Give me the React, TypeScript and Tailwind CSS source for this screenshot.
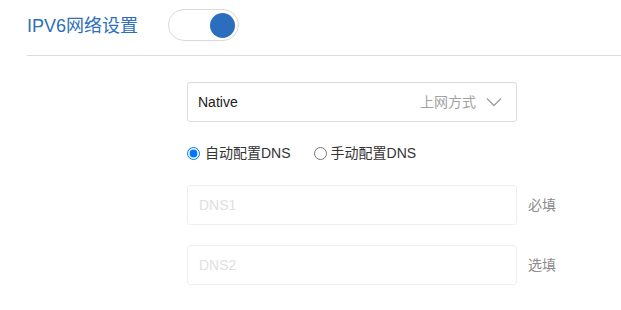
import React from 'react';

const font = { fontFamily: '"Liberation Sans", "Noto Sans CJK SC", sans-serif' };

const Toggle: React.FC<{ on: boolean }> = ({ on }) => (
  <div
    className={`w-[71px] h-[32px] rounded-full border border-[#dadada] bg-white flex items-center px-[3px] ${
      on ? 'justify-end' : 'justify-start'
    }`}
  >
    <div className="w-[25px] h-[25px] rounded-full bg-[#2a6ebd]" />
  </div>
);

const ChevronDown = () => (
  <svg width="16" height="10" viewBox="0 0 16 10" fill="none">
    <path d="M1 1.5 L8 8.5 L15 1.5" stroke="#a0a0a0" strokeWidth="1.4" />
  </svg>
);

const DnsField: React.FC<{ placeholder: string; hint: string }> = ({ placeholder, hint }) => (
  <div className="flex items-center">
    <input
      disabled
      placeholder={placeholder}
      className="w-[330px] h-[40px] border border-[#efefef] rounded-[3px] bg-white pl-[11px] text-[14px] outline-none placeholder:text-[#e0e0e0]"
      style={font}
    />
    <span className="ml-[11px] text-[14px] leading-[20px] text-[#8c8c8c]">{hint}</span>
  </div>
);

export default function App() {
  return (
    <div className="w-[621px] h-[310px] bg-white overflow-hidden" style={font}>
      <div className="ml-[27px] h-[56px] border-b border-[#dcdcdc] pt-[9px]">
        <div className="flex items-center h-[32px]">
          <span className="text-[18px] leading-[24px] text-[#2c6fbc] mt-[2px] w-[141px]">IPV6网络设置</span>
          <Toggle on />
        </div>
      </div>

      <div className="ml-[187px] mt-[26px] flex flex-col">
        <div className="w-[330px] h-[40px] border border-[#dcdcdc] rounded-[3px] flex items-center pl-[10px] pr-[14px]">
          <span className="text-[14px] text-[#222]">Native</span>
          <span className="ml-auto text-[14px] text-[#a3a3a3]">上网方式</span>
          <span className="ml-[10px] flex items-center">
            <ChevronDown />
          </span>
        </div>

        <div className="mt-[21px] h-[20px] flex items-center text-[14px] text-[#333]">
          <label className="flex items-center">
            <input type="radio" name="dns" defaultChecked className="w-[13px] h-[13px]" />
            <span className="ml-[5px]">自动配置DNS</span>
          </label>
          <label className="flex items-center ml-[23px]">
            <input type="radio" name="dns" className="w-[13px] h-[13px]" />
            <span className="ml-[4px]">手动配置DNS</span>
          </label>
        </div>

        <div className="mt-[22px]">
          <DnsField placeholder="DNS1" hint="必填" />
        </div>
        <div className="mt-[20px]">
          <DnsField placeholder="DNS2" hint="选填" />
        </div>
      </div>
    </div>
  );
}
